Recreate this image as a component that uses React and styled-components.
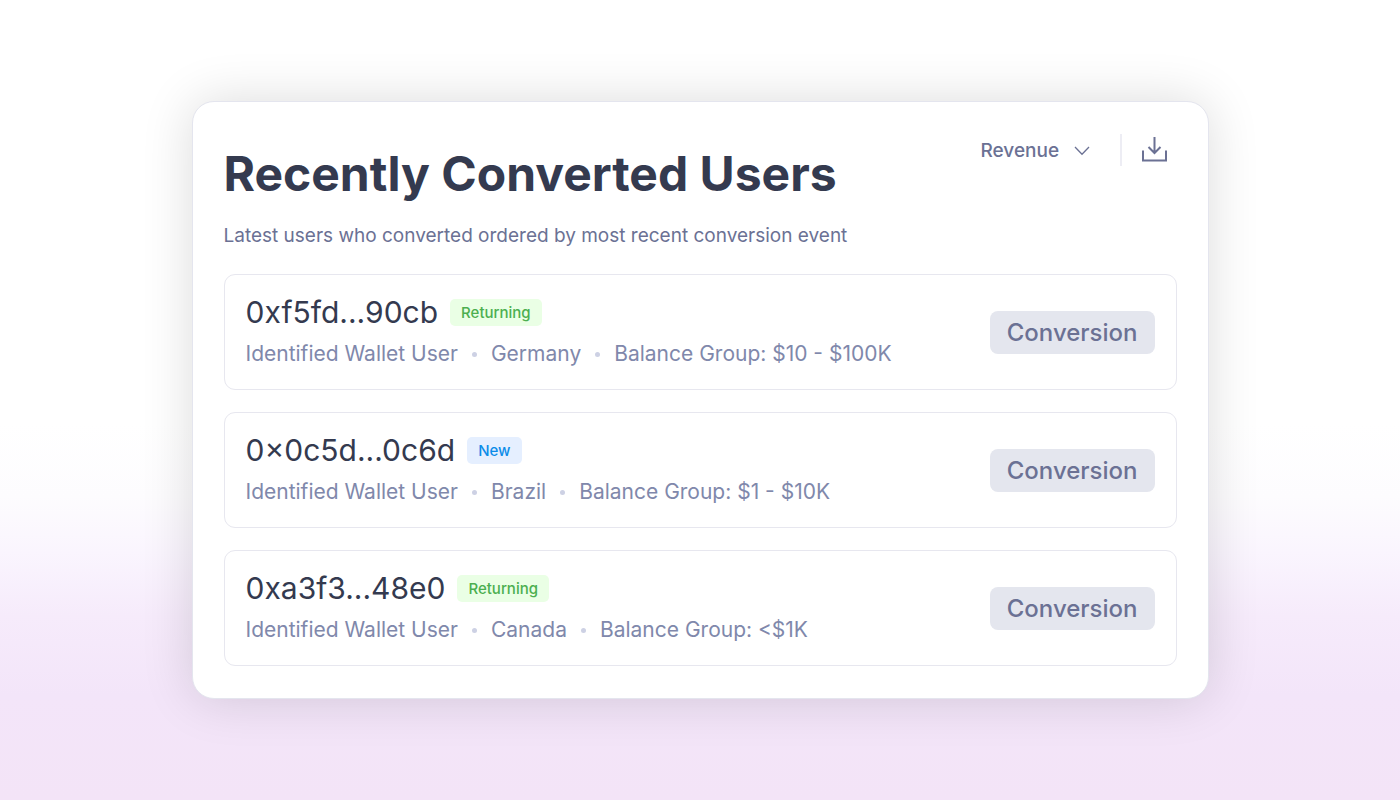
import { Fragment, useState } from 'react';
import styled, { createGlobalStyle, css } from 'styled-components';

const users = [
	{
		address: '0xf5fd...90cb',
		status: 'Returning',
		country: 'Germany',
		balance: '$10 - $100K',
	},
	{
		address: '0×0c5d...0c6d',
		status: 'New',
		country: 'Brazil',
		balance: '$1 - $10K',
	},
	{
		address: '0xa3f3...48e0',
		status: 'Returning',
		country: 'Canada',
		balance: '<$1K',
	},
];

const GlobalStyle = createGlobalStyle`
	*,
	*::before,
	*::after {
		box-sizing: border-box;
	}

	body {
		margin: 0;
		font-family: Inter, 'Liberation Sans', sans-serif;
	}

	h1,
	h2,
	p,
	ul {
		margin: 0;
		padding: 0;
	}
`;

const Page = styled.main`
	display: flex;
	align-items: center;
	justify-content: center;
	min-height: 100vh;
	padding: 32px;
	background: linear-gradient(
		to bottom,
		#ffffff 0%,
		#ffffff 53%,
		#fdfcfe 62%,
		#faf5fe 69%,
		#f6ebfb 77%,
		#f3e5f9 87%,
		#f3e4f7 100%
	);
`;

const Card = styled.section`
	width: 100%;
	max-width: 1017px;
	padding: 32px 31px;
	background: #ffffff;
	border: 1px solid #e4e5ee;
	border-radius: 22px;
	box-shadow: 0 0 52px rgba(0, 0, 0, 0.14);
`;

const Header = styled.header`
	display: flex;
	justify-content: space-between;
	align-items: flex-start;
	margin-bottom: 26px;
`;

const Title = styled.h1`
	color: #343a4f;
	font-size: 48px;
	font-weight: 700;
	line-height: 80px;
`;

const Subtitle = styled.p`
	margin-top: 10px;
	color: #6b7194;
	font-size: 19px;
	line-height: 24px;
`;

const Toolbar = styled.div`
	display: flex;
	align-items: center;
	height: 32px;
`;

const SelectBox = styled.div`
	display: flex;
	align-items: center;
	position: relative;
	padding-right: 30px;
	border-right: 2px solid #ededf4;

	svg {
		position: absolute;
		right: 30px;
		pointer-events: none;
	}
`;

const Select = styled.select`
	width: 109px;
	height: 32px;
	padding: 0;
	appearance: none;
	background: transparent;
	border: none;
	color: #6b7194;
	font-family: inherit;
	font-size: 19px;
	font-weight: 500;
	cursor: pointer;
`;

const IconButton = styled.button`
	display: flex;
	margin: 0 9px 0 18px;
	padding: 0;
	background: none;
	border: none;
	color: #6b7194;
	cursor: pointer;
`;

const UserList = styled.ul`
	display: flex;
	flex-direction: column;
	gap: 22px;
	list-style: none;
`;

const UserRow = styled.li`
	display: flex;
	align-items: center;
	justify-content: space-between;
	padding: 21px;
	border: 1px solid #e7e7ef;
	border-radius: 11px;
`;

const UserTop = styled.div`
	display: flex;
	align-items: center;
	gap: 12px;
	margin-bottom: 12px;
`;

const Address = styled.h2`
	color: #343a4f;
	font-size: 30px;
	font-weight: 400;
	line-height: 32px;
`;

const Badge = styled.span`
	padding: 0 11px;
	border-radius: 5px;
	font-size: 15px;
	font-weight: 500;
	line-height: 27px;

	${({ $status }) =>
		$status === 'New'
			? css`
					background: #e5efff;
					color: #0c8ce9;
				`
			: css`
					background: #eaffe5;
					color: #4caf50;
				`}
`;

const Meta = styled.div`
	display: flex;
	align-items: center;
	gap: 14px;
	color: #8088ab;
	font-size: 21px;
	line-height: 28px;
`;

const Dot = styled.span`
	width: 5px;
	height: 5px;
	border-radius: 50%;
	background: #cdd1e4;
`;

const ConversionButton = styled.button`
	height: 43px;
	padding: 0 17px;
	background: #e4e6ee;
	border: none;
	border-radius: 8px;
	color: #6b7194;
	font-family: inherit;
	font-size: 24px;
	font-weight: 500;
	cursor: pointer;
`;

const ChevronIcon = () => (
	<svg width="16" height="12" viewBox="0 0 16 12" fill="none" aria-hidden="true">
		<path d="M1 3 8 10.2 15 3" stroke="#6b7194" strokeWidth="1.3" />
	</svg>
);

const DownloadIcon = () => (
	<svg width="28" height="28" viewBox="0 0 28 28" fill="none" aria-hidden="true">
		<path
			d="M14.5 1v16.5M8.5 11l6 6 6-6M3 14.5v10h23v-10"
			stroke="currentColor"
			strokeWidth="2"
		/>
	</svg>
);

const UserItem = ({ user }) => {
	const details = [
		'Identified Wallet User',
		user.country,
		`Balance Group: ${user.balance}`,
	];

	return (
		<UserRow>
			<div>
				<UserTop>
					<Address>{user.address}</Address>
					<Badge $status={user.status}>{user.status}</Badge>
				</UserTop>
				<Meta>
					{details.map((detail, index) => (
						<Fragment key={detail}>
							{index > 0 && <Dot />}
							<span>{detail}</span>
						</Fragment>
					))}
				</Meta>
			</div>
			<ConversionButton type="button">Conversion</ConversionButton>
		</UserRow>
	);
};

const App = () => {
	const [metric, setMetric] = useState('revenue');

	return (
		<>
			<GlobalStyle />
			<Page>
				<Card>
					<Header>
						<div>
							<Title>Recently Converted Users</Title>
							<Subtitle>
								Latest users who converted ordered by most recent conversion event
							</Subtitle>
						</div>
						<Toolbar>
							<SelectBox>
								<Select
									aria-label="Metric"
									value={metric}
									onChange={(e) => setMetric(e.target.value)}
								>
									<option value="revenue">Revenue</option>
								</Select>
								<ChevronIcon />
							</SelectBox>
							<IconButton type="button" aria-label="Download">
								<DownloadIcon />
							</IconButton>
						</Toolbar>
					</Header>
					<UserList>
						{users.map((user) => (
							<UserItem key={user.address} user={user} />
						))}
					</UserList>
				</Card>
			</Page>
		</>
	);
};

export default App;
